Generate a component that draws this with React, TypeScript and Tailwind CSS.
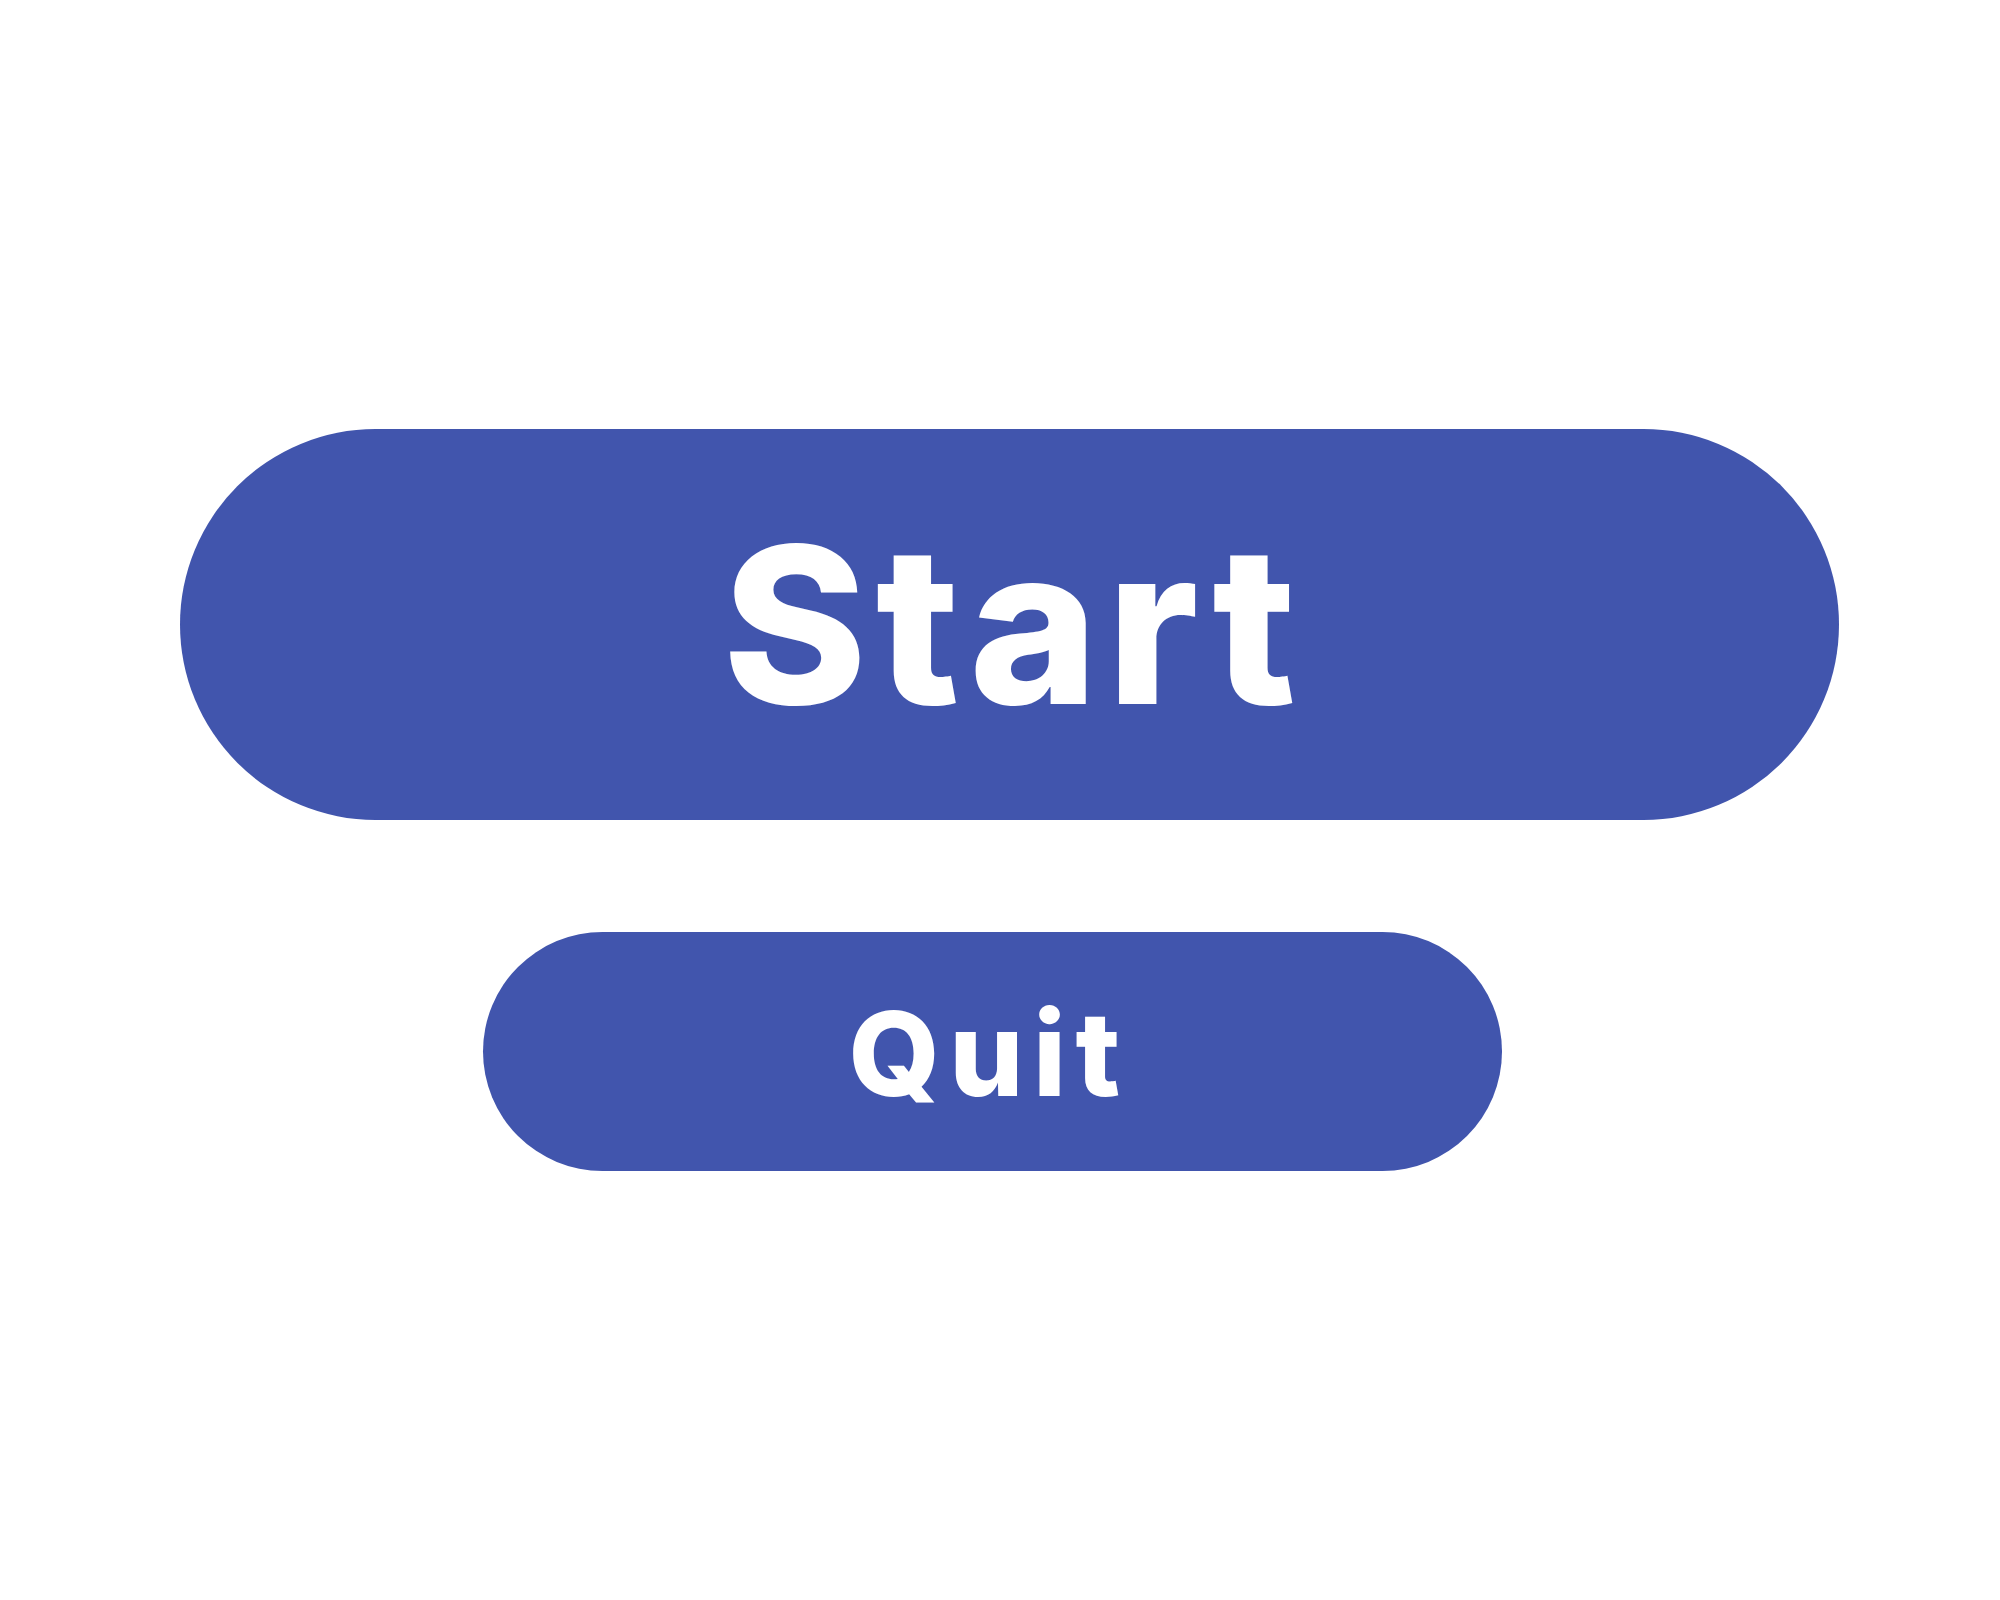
export default function App() {
  return (
    <div className="flex h-screen w-full flex-col items-center justify-center gap-[112px] bg-white font-['Inter',sans-serif]">
      <button className="ml-[19px] flex h-[391px] w-[1659px] items-center justify-center rounded-full bg-[#4155ad] pl-[8px] text-white">
        <span className="text-[219px] font-extrabold leading-none tracking-[0.04em]">Start</span>
      </button>
      <button className="mr-[15px] flex h-[239px] w-[1019px] items-center justify-center rounded-full bg-[#4155ad] pt-[3px] pr-[7px] text-white">
        <span className="text-[117px] font-extrabold leading-none tracking-[0.08em]">Quit</span>
      </button>
    </div>
  );
}
